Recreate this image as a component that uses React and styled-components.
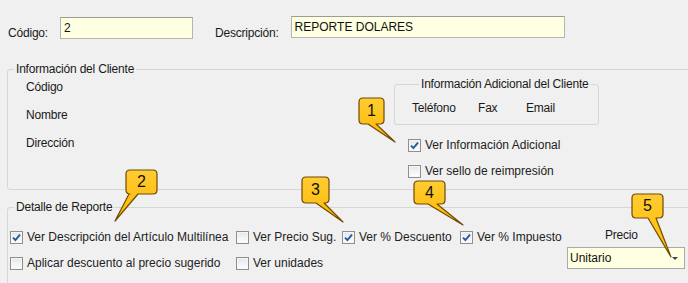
import React from "react";
import styled, { createGlobalStyle } from "styled-components";

const GlobalStyle = createGlobalStyle`
  body {
    margin: 0;
    background: #f0f0f0;
    overflow: hidden;
  }
`;

const Window = styled.div`
  position: relative;
  width: 688px;
  height: 283px;
  overflow: hidden;
  background: #f0f0f0;
  font-family: "Liberation Sans", Arial, sans-serif;
  font-size: 12px;
  color: #1a1a1a;
`;

const HeaderRow = styled.div`
  display: flex;
  align-items: flex-start;
  padding: 17px 0 0 8px;
`;

const FieldLabel = styled.span`
  padding-top: 9px;
  line-height: 14px;
  margin-left: ${(p) => p.$ml || 0}px;
  margin-right: 12px;
  letter-spacing: -0.2px;
`;

const TextBox = styled.div`
  box-sizing: border-box;
  width: ${(p) => p.$w}px;
  height: 22px;
  margin-top: ${(p) => p.$mt || 0}px;
  padding-left: 3px;
  line-height: 20px;
  background: #ffffe1;
  border: 1px solid #b4b4b4;
  border-top-color: #9c9c9c;
  color: #111;
`;

const Group = styled.fieldset`
  box-sizing: border-box;
  height: ${(p) => p.$h}px;
  margin: ${(p) => p.$mt}px -20px 0 7px;
  padding: 0;
  min-width: 0;
  border: 1px solid #d6d6d6;
  border-radius: 3px;
`;

const Legend = styled.legend`
  margin-left: ${(p) => p.$ml ?? 6}px;
  padding: 0 2px;
  line-height: 14px;
  letter-spacing: -0.2px;
`;

const ClientBody = styled.div`
  display: flex;
`;

const ClientLabels = styled.div`
  box-sizing: border-box;
  flex: 0 0 386px;
  display: flex;
  flex-direction: column;
  gap: 14px;
  padding: 4px 0 0 18px;
  line-height: 14px;
  letter-spacing: -0.2px;
`;

const ClientRight = styled.div`
  display: flex;
  flex-direction: column;
`;

const SubGroup = styled.fieldset`
  box-sizing: border-box;
  width: 205px;
  height: 48px;
  margin: 1px 0 0 0;
  padding: 10px 0 0 17px;
  min-width: 0;
  border: 1px solid #d6d6d6;
  border-radius: 3px;
`;

const ContactRow = styled.div`
  display: grid;
  grid-template-columns: 66px 48px auto;
  line-height: 14px;
  letter-spacing: -0.2px;
`;

const CheckList = styled.div`
  display: flex;
  flex-direction: column;
  gap: 12px;
  margin-top: 13px;
  padding-left: 14px;
`;

const CheckRow = styled.label`
  display: flex;
  align-items: center;
  gap: 4px;
  height: 14px;
  line-height: 14px;
  white-space: nowrap;
  color: #222;
`;

const Box = styled.span`
  box-sizing: border-box;
  flex: 0 0 13px;
  width: 13px;
  height: 13px;
  border: 1px solid #8e8f8f;
  background: linear-gradient(#e6e6e6, #ffffff);
  box-shadow: inset 0 0 0 1px #f6f6f6;
  display: flex;
  align-items: center;
  justify-content: center;
`;

const DetailGrid = styled.div`
  display: grid;
  grid-template-columns: 226px 106px 118px 107px 118px;
  grid-template-rows: 14px 14px;
  row-gap: 12px;
  padding: 16px 0 0 2px;
`;

const PriceColumn = styled.div`
  grid-column: 5;
  grid-row: 1 / 3;
  display: flex;
  flex-direction: column;
`;

const PriceLabel = styled.span`
  margin-top: -2px;
  line-height: 14px;
  padding-left: 38px;
  letter-spacing: -0.2px;
`;

const Select = styled.div`
  box-sizing: border-box;
  display: flex;
  align-items: center;
  justify-content: space-between;
  width: 118px;
  height: 22px;
  margin-top: 5px;
  padding: 0 6px 0 2px;
  background: #ffffe1;
  border: 1px solid #a9a9a9;
  color: #111;
`;

const Arrow = styled.span`
  width: 0;
  height: 0;
  border-left: 3px solid transparent;
  border-right: 3px solid transparent;
  border-top: 3px solid #444;
`;

const Overlay = styled.svg`
  position: absolute;
  left: 0;
  top: 0;
  pointer-events: none;
`;

const CalloutNumber = styled.div`
  position: absolute;
  display: flex;
  align-items: center;
  justify-content: center;
  font-size: 16px;
  color: #111;
`;

function CheckBox({ checked, children }) {
  return (
    <CheckRow>
      <Box>
        {checked && (
          <svg width="9" height="9" viewBox="0 0 9 9">
            <path
              d="M1 4.6 L3.4 7 L8 1.6"
              fill="none"
              stroke="#2a57a6"
              strokeWidth="1.9"
            />
          </svg>
        )}
      </Box>
      {children}
    </CheckRow>
  );
}

const callouts = [
  { n: 1, x: 359, y: 98, w: 25, h: 26, b1: 368, b2: 376, tx: 395, ty: 142 },
  { n: 2, x: 126, y: 170, w: 31, h: 24, b1: 129, b2: 138, tx: 115, ty: 221 },
  { n: 3, x: 302, y: 177, w: 27, h: 26, b1: 316, b2: 324, tx: 343, ty: 222 },
  { n: 4, x: 414, y: 181, w: 31, h: 23, b1: 428, b2: 437, tx: 463, ty: 225 },
  { n: 5, x: 632, y: 194, w: 31, h: 24, b1: 648, b2: 656, tx: 671, ty: 257 },
];

function calloutPath({ x, y, w, h, b1, b2, tx, ty }) {
  const r = 4;
  return `M${x + r},${y} H${x + w - r} Q${x + w},${y} ${x + w},${y + r} V${
    y + h - r
  } Q${x + w},${y + h} ${x + w - r},${y + h} H${b2} L${tx},${ty} L${b1},${
    y + h
  } H${x + r} Q${x},${y + h} ${x},${y + h - r} V${y + r} Q${x},${y} ${
    x + r
  },${y} Z`;
}

export default function App() {
  return (
    <Window>
      <GlobalStyle />
      <HeaderRow>
        <FieldLabel>Código:</FieldLabel>
        <TextBox $w={133}>2</TextBox>
        <FieldLabel $ml={22}>Descripción:</FieldLabel>
        <TextBox $w={274} $mt={-1}>
          REPORTE DOLARES
        </TextBox>
      </HeaderRow>

      <Group $mt={22} $h={128}>
        <Legend>Información del Cliente</Legend>
        <ClientBody>
          <ClientLabels>
            <span>Código</span>
            <span>Nombre</span>
            <span>Dirección</span>
          </ClientLabels>
          <ClientRight>
            <SubGroup>
              <Legend $ml={7}>Información Adicional del Cliente</Legend>
              <ContactRow>
                <span>Teléfono</span>
                <span>Fax</span>
                <span>Email</span>
              </ContactRow>
            </SubGroup>
            <CheckList>
              <CheckBox checked>Ver Información Adicional</CheckBox>
              <CheckBox>Ver sello de reimpresión</CheckBox>
            </CheckList>
          </ClientRight>
        </ClientBody>
      </Group>

      <Group $mt={10} $h={120}>
        <Legend>Detalle de Reporte</Legend>
        <DetailGrid>
          <CheckBox checked>Ver Descripción del Artículo Multilínea</CheckBox>
          <CheckBox>Ver Precio Sug.</CheckBox>
          <CheckBox checked>Ver % Descuento</CheckBox>
          <CheckBox checked>Ver % Impuesto</CheckBox>
          <PriceColumn>
            <PriceLabel>Precio</PriceLabel>
            <Select>
              Unitario
              <Arrow />
            </Select>
          </PriceColumn>
          <CheckBox>Aplicar descuento al precio sugerido</CheckBox>
          <CheckBox>Ver unidades</CheckBox>
        </DetailGrid>
      </Group>

      <Overlay width="688" height="283" viewBox="0 0 688 283">
        <defs>
          <linearGradient id="calloutFill" x1="0" y1="0" x2="0" y2="1">
            <stop offset="0" stopColor="#ffcc33" />
            <stop offset="1" stopColor="#ffb800" />
          </linearGradient>
        </defs>
        {callouts.map((c) => (
          <path
            key={c.n}
            d={calloutPath(c)}
            fill="url(#calloutFill)"
            stroke="#6e4a05"
            strokeWidth="1.2"
            strokeLinejoin="round"
          />
        ))}
      </Overlay>
      {callouts.map((c) => (
        <CalloutNumber
          key={c.n}
          style={{ left: c.x, top: c.y, width: c.w, height: c.h }}
        >
          {c.n}
        </CalloutNumber>
      ))}
    </Window>
  );
}
